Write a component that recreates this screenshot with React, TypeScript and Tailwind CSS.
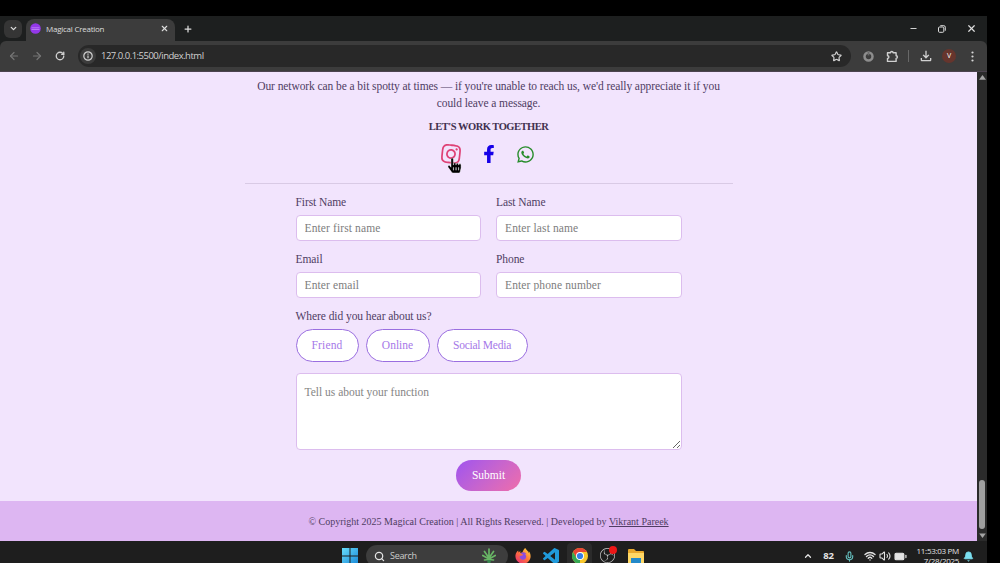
import React from 'react';
import { ArrowLeft, ArrowRight, BatteryMedium, Bell, ChevronDown, ChevronUp, Mic, Minus, Plus, RotateCw, Search, Star, Volume2, Wifi, X } from 'lucide-react';
import { FaFacebookF, FaFirefoxBrowser, FaHandPointer, FaInstagram, FaWhatsapp } from 'react-icons/fa';
import { MdOutlineFileDownload } from 'react-icons/md';
import { SiObsstudio } from 'react-icons/si';

interface FieldProps {
  label: string;
  placeholder: string;
  type?: string;
}

const Field: React.FC<FieldProps> = ({ label, placeholder, type = 'text' }) => (
  <label className="block">
    <span className="block h-4 text-[11.5px] leading-4 tracking-[-0.08px] whitespace-nowrap text-[#4f3d63]">{label}</span>
    <input
      type={type}
      placeholder={placeholder}
      className="mt-[5px] block h-[26px] w-full rounded-[4px] border border-[#dcbdee] bg-white px-2 text-[11.5px] tracking-[0.12px] placeholder-[#7d7d7d] outline-none"
    />
  </label>
);

const sources = [
  { name: 'Friend', className: 'w-[63px] tracking-[0.15px]' },
  { name: 'Online', className: 'w-[64px]' },
  { name: 'Social Media', className: 'w-[91px] tracking-[-0.25px]' },
];

const TitleBar: React.FC = () => (
  <div className="flex h-[25px] items-center bg-[#1d1f1f] text-[#dddddd]">
    <div className="ml-1 flex h-[18px] w-[18px] items-center justify-center rounded-md bg-[#353535]">
      <ChevronDown size={9} strokeWidth={3.5} />
    </div>
    <div className="ml-[4px] flex h-[22px] w-[149px] items-center self-end rounded-t-lg bg-[#3c3c3c] pb-[3px] pl-[4px]">
      <svg width="11" height="11" viewBox="0 0 11 11">
        <circle cx="5.5" cy="5.5" r="5.3" fill="#9338e8" />
        <path d="M1.5 4.8h8M1.5 6.5h8" stroke="#c58af7" strokeWidth=".8" />
      </svg>
      <span className="ml-[5px] flex-1 whitespace-nowrap text-[8px] tracking-[-0.25px]">Magical Creation</span>
      <X size={9} strokeWidth={3} className="mr-[6px]" />
    </div>
    <Plus size={10} strokeWidth={3} className="ml-[8px]" />
    <div className="mr-[10px] ml-auto flex items-center">
      <Minus size={9} strokeWidth={2.5} />
      <svg width="8" height="8" viewBox="0 0 8 8" fill="none" stroke="currentColor" className="ml-[20px]">
        <rect x=".5" y="2" width="5.3" height="5.3" rx="1" />
        <path d="M2.3.7h3.5a1.5 1.5 0 0 1 1.5 1.5v3.5" />
      </svg>
      <X size={11} strokeWidth={2.6} className="ml-[20px]" />
    </div>
  </div>
);

const Toolbar: React.FC = () => (
  <div className="flex h-[30px] items-center rounded-t-md bg-[#3c3c3c] text-[#d0d0d0]">
    <ArrowLeft size={12} strokeWidth={2.4} className="ml-[8px] text-[#757575]" />
    <ArrowRight size={12} strokeWidth={2.4} className="ml-[11px] text-[#757575]" />
    <RotateCw size={10} strokeWidth={3.2} className="ml-[12px]" />
    <div className="ml-[13px] flex h-[22px] w-[773px] items-center rounded-full bg-[#282828] pl-[2px]">
      <div className="flex h-[16px] w-[16px] items-center justify-center rounded-full bg-[#3c3c3c]">
        <svg width="10" height="10" viewBox="0 0 10 10" fill="none" stroke="currentColor" strokeWidth="1.2">
          <circle cx="5" cy="5" r="4.2" />
          <path d="M5 4.5v2.8M5 2.6v1.1" />
        </svg>
      </div>
      <span className="ml-[5px] text-[9.5px] tracking-[-0.5px]">127.0.0.1:5500/index.html</span>
      <Star size={11} strokeWidth={2.6} className="mr-[9px] ml-auto" />
    </div>
    <svg width="11" height="11" viewBox="0 0 11 11" className="ml-[12px]">
      <circle cx="5.5" cy="5.5" r="4" fill="none" stroke="#8d8d8d" strokeWidth="2.5" />
      <path d="M4.6 1h1.8v3.4H4.6z" fill="#6b6b6b" />
    </svg>
    <svg width="13" height="13" viewBox="0 0 13 13" fill="none" stroke="currentColor" strokeWidth="1.4" strokeLinejoin="round" className="ml-[12px]">
      <path d="M1.5 2.8h3a1.3 1.3 0 0 1 2.6 0h3v3a1.3 1.3 0 0 1 0 2.6v3H1.5V8.5a1.4 1.4 0 0 0 0-2.8z" />
    </svg>
    <div className="ml-[9px] h-3 w-px bg-[#686868]" />
    <MdOutlineFileDownload size={16} className="ml-[9px]" />
    <div className="ml-[8px] flex h-[14px] w-[14px] items-center justify-center rounded-full bg-[#66352d] text-[7px] text-white">V</div>
    <svg width="3" height="11" viewBox="0 0 3 11" fill="#d8d8d8" className="ml-[15px]">
      <circle cx="1.5" cy="1.5" r="1.1" />
      <circle cx="1.5" cy="5.5" r="1.1" />
      <circle cx="1.5" cy="9.5" r="1.1" />
    </svg>
  </div>
);

const Contact: React.FC = () => (
  <div className="mx-auto w-[488px] border-b border-[#d9cae5] pt-[6px] text-center text-[#4f3d63]">
    <p className="text-[11.5px] leading-[16.5px] tracking-[-0.08px] whitespace-nowrap">
      Our network can be a bit spotty at times — if you're unable to reach us, we'd really appreciate it if you
      <br />
      could leave a message.
    </p>
    <h2 className="mt-2 text-[10.5px] leading-4 font-bold tracking-[-0.5px] text-[#42314f]">LET'S WORK TOGETHER</h2>
    <div className="relative mt-[9px] flex h-[20px] items-center justify-center">
      <FaInstagram size={22} className="mr-[18px] rotate-6 text-[#df4276]" />
      <FaFacebookF size={18} className="mr-[18px] text-[#1600e8]" />
      <FaWhatsapp size={19} className="mr-[3px] text-[#278c2b]" />
      <FaHandPointer size={15} className="absolute top-[14px] left-[202px] stroke-white stroke-[14px] text-black" />
    </div>
    <div className="h-[19px]" />
  </div>
);

const ContactForm: React.FC = () => (
  <form className="mx-auto w-[386px] pt-[10px]" onSubmit={(e) => e.preventDefault()}>
    <div className="grid grid-cols-2 gap-x-[15px] gap-y-[10px]">
      <Field label="First Name" placeholder="Enter first name" />
      <Field label="Last Name" placeholder="Enter last name" />
      <Field label="Email" placeholder="Enter email" type="email" />
      <Field label="Phone" placeholder="Enter phone number" type="tel" />
    </div>
    <p className="mt-[10px] text-[11.5px] leading-4 tracking-[-0.06px] text-[#4f3d63]">Where did you hear about us?</p>
    <div className="mt-[5px] flex gap-[7px]">
      {sources.map((source) => (
        <button
          key={source.name}
          type="button"
          className={`h-[33px] rounded-full border border-[#9a6ee0] bg-white text-[11.5px] whitespace-nowrap text-[#a678e8] ${source.className}`}
        >
          {source.name}
        </button>
      ))}
    </div>
    <textarea
      placeholder="Tell us about your function"
      className="mt-[11px] block h-[77px] w-full rounded-[4px] border border-[#dcbdee] bg-white px-[8px] pt-[10px] text-[11.5px] leading-4 placeholder-[#858585] outline-none"
    />
    <button
      type="submit"
      className="mx-auto mt-[10px] block h-[31px] w-[65px] rounded-full bg-linear-135 from-[#a052ef] to-[#f06ca9] text-[11.5px] text-white"
    >
      Submit
    </button>
  </form>
);

const Scrollbar: React.FC = () => (
  <div className="flex w-[10px] flex-col items-center bg-[#2b2b2b]">
    <svg width="7" height="6" viewBox="0 0 7 6" className="mt-[3px]">
      <path d="M3.5 0 7 4.8H0z" fill="#a5a5a5" />
    </svg>
    <div className="mt-auto h-[49px] w-[6px] rounded-full bg-[#9f9f9f]" />
    <svg width="7" height="6" viewBox="0 0 7 6" className="mt-[4px] mb-[2px]">
      <path d="M.2.5h6.6L3.5 5z" fill="#a5a5a5" />
    </svg>
  </div>
);

const Taskbar: React.FC = () => (
  <div className="flex h-[30px] w-[987px] items-center bg-[#1e1e1e] text-[#e4e4e4]">
    <svg width="16" height="16" viewBox="0 0 16 16" className="ml-[342px]">
      <defs>
        <linearGradient id="win" x1="0" y1="0" x2="1" y2="1">
          <stop stopColor="#68dcfb" />
          <stop offset="1" stopColor="#1989d8" />
        </linearGradient>
      </defs>
      <path d="M0 0h7.5v7.5H0zM8.5 0H16v7.5H8.5zM0 8.5h7.5V16H0zM8.5 8.5H16V16H8.5z" fill="url(#win)" />
    </svg>
    <div className="ml-2 flex h-[22px] w-[142px] items-center rounded-full bg-[#3d3d3d] pl-2">
      <Search size={11} strokeWidth={2.7} />
      <span className="ml-[5px] text-[9px] tracking-[-0.3px] text-[#cccccc]">Search</span>
      <svg width="14" height="16" viewBox="0 0 14 16" className="mr-[12px] ml-auto">
        <path d="M7 11V1M7 10 2.5 3.5M7 10l4.5-6.5M7 11 .8 7.5M7 11l6.2-3.5M7 11.5 2.5 12M7 11.5l4.5.5" fill="none" stroke="#68b565" strokeWidth="1.7" strokeLinecap="round" />
        <path d="M5 12h4l-.7 4H5.8z" fill="#3a8750" />
      </svg>
    </div>
    <svg width="0" height="0">
      <defs>
        <linearGradient id="firefox" x1=".9" y1="0" x2=".1" y2="1">
          <stop stopColor="#ffdb3c" />
          <stop offset=".5" stopColor="#ff703b" />
          <stop offset="1" stopColor="#e52b79" />
        </linearGradient>
      </defs>
    </svg>
    <div className="relative ml-[7px] h-4 w-4">
      <div className="absolute top-1 left-1 h-2.5 w-2.5 rounded-full bg-[#8b4bdf]" />
      <FaFirefoxBrowser size={16} fill="url(#firefox)" className="absolute" />
    </div>
    <svg width="16" height="16" viewBox="0 0 24 24" className="ml-[12px]">
      <path
        d="M23.15 2.587L18.21.21a1.494 1.494 0 0 0-1.705.29l-9.46 8.63-4.12-3.128a.999.999 0 0 0-1.276.057L.327 7.261A1 1 0 0 0 .326 8.74L3.899 12 .326 15.26a1 1 0 0 0 .001 1.479L1.65 17.94a.999.999 0 0 0 1.276.057l4.12-3.128 9.46 8.63a1.492 1.492 0 0 0 1.704.29l4.942-2.377A1.5 1.5 0 0 0 24 20.06V3.939a1.5 1.5 0 0 0-.85-1.352zm-5.146 14.861L10.826 12l7.178-5.448v10.896z"
        fill="#209bdc"
      />
    </svg>
    <div className="ml-[8px] flex h-[26px] w-[25px] items-center justify-center rounded bg-[#2b2b2b]">
      <svg width="16" height="16" viewBox="0 0 16 16">
        <circle cx="8" cy="8" r="8" fill="#f9c72b" />
        <path d="M1.07 4A8 8 0 0 1 14.93 4H8L4.5 10z" fill="#e94436" />
        <path d="M1.07 4 4.54 10 8 12l0 4A8 8 0 0 1 1.07 4z" fill="#36a853" />
        <circle cx="8" cy="8" r="4" fill="#fff" />
        <circle cx="8" cy="8" r="3.1" fill="#367fe8" />
      </svg>
    </div>
    <div className="relative ml-[8px] h-4 w-4">
      <SiObsstudio size={15} className="text-[#c8c8c8]" />
      <div className="absolute -top-[2px] left-[9px] h-2 w-2 rounded-full bg-[#ed1717]" />
    </div>
    <svg width="16" height="16" viewBox="0 0 16 16" className="ml-[12px]">
      <path d="M0 2q0-1 1-1h5l2 2h7q1 0 1 1v11H0z" fill="#e9a92d" />
      <path d="M0 5h16v10H0z" fill="#ffd866" />
      <path d="M3 10h10v5H3z" fill="#2489c9" />
    </svg>
    <div className="mr-[13px] ml-auto flex items-center">
      <ChevronUp size={10} strokeWidth={3} />
      <span className="ml-[10px] text-[9.5px] font-bold">82</span>
      <Mic size={11} strokeWidth={2.5} className="ml-[10px] text-[#64bebd]" />
      <Wifi size={12} strokeWidth={2.8} className="ml-[9px]" />
      <Volume2 size={12} strokeWidth={2.2} className="ml-[3px]" />
      <BatteryMedium size={13} strokeWidth={2.3} fill="#e4e4e4" className="ml-[3px]" />
      <div className="ml-[9px] flex w-[43px] flex-col items-end text-[8px] leading-[10px] tracking-[-0.3px] whitespace-nowrap">
        <div>11:53:03 PM</div>
        <div>7/28/2025</div>
      </div>
      <Bell size={11} fill="#7bdff0" className="ml-[4px] text-[#7bdff0]" />
    </div>
  </div>
);

const App: React.FC = () => {
  return (
    <div className="h-[563px] w-[1000px] overflow-hidden bg-black pt-4 font-['Open_Sans',sans-serif]">
      <div className="w-[987px] bg-[#1d1f1f]">
        <TitleBar />
        <Toolbar />
      </div>
      <div className="flex h-[470px] w-[987px] border-t border-[#4c434f]">
        <main className="flex w-[977px] flex-col bg-[#f2e4fd] font-['Liberation_Serif',serif]">
          <Contact />
          <ContactForm />
          <footer className="mt-auto flex h-[40px] items-center justify-center bg-[#ddb6f2] text-[10px] text-[#4f3d63]">
            <p className="whitespace-nowrap">
              © Copyright 2025 Magical Creation | All Rights Reserved. | Developed by{' '}
              <a href="#" className="underline">Vikrant Pareek</a>
            </p>
          </footer>
        </main>
        <Scrollbar />
      </div>
      <Taskbar />
    </div>
  );
};

export default App;
